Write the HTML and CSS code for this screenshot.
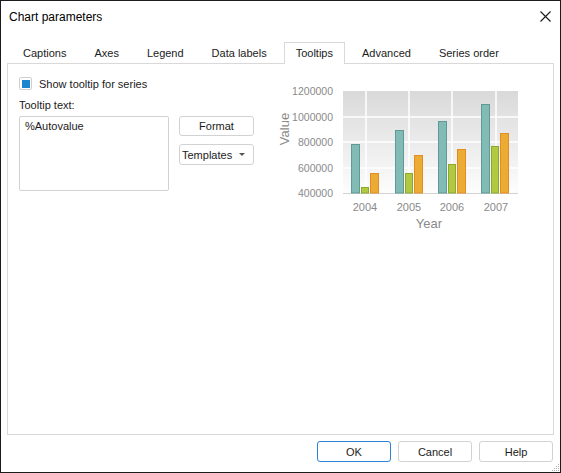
FILE: index.html
```html
<!DOCTYPE html>
<html lang="en">
<head>
    <meta charset="UTF-8">
    <title>Chart parameters</title>
    <link rel="stylesheet" href="styles.css">
</head>
<body>

<div class="dialog">
    <div class="titlebar">
        <span class="title">Chart parameters</span>
        <button class="close" title="Close">
            <svg width="11" height="11" viewBox="0 0 11 11"><path d="M0.5 0.5 L10.5 10.5 M10.5 0.5 L0.5 10.5" stroke="#1a1a1a" stroke-width="1.1" fill="none"/></svg>
        </button>
    </div>

    <div class="tabs">
        <div class="tab">Captions</div>
        <div class="tab">Axes</div>
        <div class="tab">Legend</div>
        <div class="tab">Data labels</div>
        <div class="tab active">Tooltips</div>
        <div class="tab">Advanced</div>
        <div class="tab">Series order</div>
    </div>

    <div class="panel">
        <div class="left">
            <label class="check">
                <span class="box"><span class="mark"></span></span>
                Show tooltip for series
            </label>
            <div class="caption">Tooltip text:</div>
            <div class="editor">
                <textarea readonly>%Autovalue</textarea>
                <div class="tools">
                    <button class="btn">Format</button>
                    <div class="combo">Templates<span class="arrow"></span></div>
                </div>
            </div>
        </div>

        <!-- preview chart -->
        <svg class="chart" width="260" height="160" viewBox="0 0 260 160">
            <defs>
                <linearGradient id="plotBg" x1="0" y1="0" x2="0" y2="1">
                    <stop offset="0" stop-color="#d9d9d9"/>
                    <stop offset="1" stop-color="#fdfdfd"/>
                </linearGradient>
            </defs>
            <rect x="71" y="14" width="175" height="102" fill="url(#plotBg)"/>
            <g stroke="#ffffff" stroke-width="1.5">
                <line x1="71" y1="40" x2="246" y2="40"/>
                <line x1="71" y1="65" x2="246" y2="65"/>
                <line x1="71" y1="91" x2="246" y2="91"/>
                <line x1="94" y1="14" x2="94" y2="116"/>
                <line x1="137" y1="14" x2="137" y2="116"/>
                <line x1="180" y1="14" x2="180" y2="116"/>
                <line x1="224" y1="14" x2="224" y2="116"/>
            </g>
            <line x1="71" y1="116.5" x2="246" y2="116.5" stroke="#d2d2d2"/>

            <g class="ticks" text-anchor="end">
                <text x="61" y="18">1200000</text>
                <text x="61" y="44">1000000</text>
                <text x="61" y="69">800000</text>
                <text x="61" y="95">600000</text>
                <text x="61" y="120">400000</text>
            </g>

            <!-- 2004 -->
            <rect class="s1" x="79.5" y="67.5" width="8" height="48.5"/>
            <rect class="s2" x="89.5" y="110.5" width="7" height="5.5"/>
            <rect class="s3" x="98.5" y="96.5" width="8" height="19.5"/>
            <!-- 2005 -->
            <rect class="s1" x="123.5" y="53.5" width="8" height="62.5"/>
            <rect class="s2" x="133.5" y="96.5" width="7" height="19.5"/>
            <rect class="s3" x="142.5" y="78.5" width="8" height="37.5"/>
            <!-- 2006 -->
            <rect class="s1" x="166.5" y="44.5" width="8" height="71.5"/>
            <rect class="s2" x="176.5" y="87.5" width="7" height="28.5"/>
            <rect class="s3" x="185.5" y="72.5" width="8" height="43.5"/>
            <!-- 2007 -->
            <rect class="s1" x="209.5" y="27.5" width="8" height="88.5"/>
            <rect class="s2" x="219.5" y="69.5" width="7" height="46.5"/>
            <rect class="s3" x="228.5" y="56.5" width="8" height="59.5"/>

            <g class="years" text-anchor="middle">
                <text x="93" y="134">2004</text>
                <text x="137" y="134">2005</text>
                <text x="180" y="134">2006</text>
                <text x="224" y="134">2007</text>
            </g>
            <text class="axis-title" x="157" y="151" text-anchor="middle">Year</text>
            <text class="axis-title" transform="translate(17,52) rotate(-90)" text-anchor="middle">Value</text>
        </svg>
    </div>

    <div class="footer">
        <button class="btn action default">OK</button>
        <button class="btn action">Cancel</button>
        <button class="btn action">Help</button>
        <svg class="grip" width="10" height="10" viewBox="0 0 10 10">
            <g fill="#b4b4b4">
                <rect x="8" y="2" width="1" height="1"/>
                <rect x="6" y="4" width="1" height="1"/><rect x="8" y="4" width="1" height="1"/>
                <rect x="4" y="6" width="1" height="1"/><rect x="6" y="6" width="1" height="1"/><rect x="8" y="6" width="1" height="1"/>
                <rect x="2" y="8" width="1" height="1"/><rect x="4" y="8" width="1" height="1"/><rect x="6" y="8" width="1" height="1"/><rect x="8" y="8" width="1" height="1"/>
            </g>
        </svg>
    </div>
</div>

</body>
</html>
```

FILE: styles.css
```css
body {
    margin: 0;
    font-family: 'Liberation Sans', Arial, sans-serif;
    font-size: 11px;
    color: #1b1b1b;
    background-color: #ffffff;
}

.dialog {
    width: 561px;
    height: 473px;
    box-sizing: border-box;
    border: 1px solid #1c1c1c;
    background-color: #ffffff;
    display: flex;
    flex-direction: column;
}

/* Title bar */
.titlebar {
    height: 31px;
    display: flex;
    align-items: center;
    padding: 0 9px 0 8px;
}

.title {
    font-size: 12px;
    color: #000000;
}

.close {
    margin-left: auto;
    border: none;
    background: none;
    padding: 0;
    width: 11px;
    height: 11px;
    display: flex;
}

/* Tabs */
.tabs {
    display: flex;
    align-items: flex-end;
    height: 21px;
    margin: 11px 6px -1px 6px;
    padding-left: 5px;
}

.tab {
    height: 21px;
    line-height: 21px;
    padding: 0 11px;
    margin-right: 6px;
    box-sizing: border-box;
}

.tab.active {
    height: 22px;
    line-height: 20px;
    border: 1px solid #d9d9d9;
    border-bottom: none;
    background-color: #ffffff;
    position: relative;
    z-index: 1;
}

/* Tab page */
.panel {
    height: 372px;
    box-sizing: border-box;
    margin: 0 6px;
    border: 1px solid #d9d9d9;
    padding: 13px 11px;
    display: flex;
    align-items: flex-start;
}

.left {
    width: 235px;
}

.check {
    display: flex;
    align-items: center;
    height: 13px;
    gap: 7px;
}

.box {
    width: 13px;
    height: 13px;
    box-sizing: border-box;
    border: 1px solid #cfcfcf;
    border-radius: 2px;
    display: flex;
    align-items: center;
    justify-content: center;
}

.mark {
    width: 8px;
    height: 8px;
    background-color: #1c86cf;
}

.caption {
    margin-top: 8px;
    line-height: 14px;
}

.editor {
    display: flex;
    margin-top: 4px;
}

.editor textarea {
    width: 150px;
    height: 75px;
    box-sizing: border-box;
    border: 1px solid #d2d2d2;
    border-radius: 2px;
    padding: 3px 5px;
    margin: 0;
    resize: none;
    font-family: inherit;
    font-size: 11px;
    color: #1b1b1b;
    outline: none;
}

.tools {
    margin-left: 10px;
    width: 75px;
}

.btn {
    display: block;
    width: 75px;
    height: 20px;
    box-sizing: border-box;
    border: 1px solid #d2d2d2;
    border-radius: 3px;
    background-color: #ffffff;
    font-family: inherit;
    font-size: 11px;
    color: #1b1b1b;
    padding: 0;
}

.combo {
    margin-top: 8px;
    height: 21px;
    box-sizing: border-box;
    border: 1px solid #d2d2d2;
    border-radius: 3px;
    display: flex;
    align-items: center;
    padding-left: 2px;
}

.arrow {
    margin-left: auto;
    margin-right: 8px;
    border-left: 3px solid transparent;
    border-right: 3px solid transparent;
    border-top: 3px solid #555555;
}

/* Chart preview */
.chart {
    margin-left: 18px;
    display: block;
}

.chart text {
    font-family: 'Liberation Sans', Arial, sans-serif;
    fill: #8a8a8a;
}

.ticks text {
    font-size: 10.5px;
}

.years text {
    font-size: 11px;
}

.chart .axis-title {
    font-size: 13px;
}

.s1 { fill: #82bab6; stroke: #5e9a96; }
.s2 { fill: #b0c940; stroke: #8da82f; }
.s3 { fill: #ecab35; stroke: #e28c22; }

/* Bottom buttons */
.footer {
    display: flex;
    justify-content: flex-end;
    gap: 7px;
    margin-top: 6px;
    padding-right: 7px;
    position: relative;
    flex: 1;
}

.btn.action {
    width: 74px;
    height: 21px;
}

.btn.default {
    border-color: #2b83d6;
}

.grip {
    position: absolute;
    right: 0;
    bottom: 0;
}
```
